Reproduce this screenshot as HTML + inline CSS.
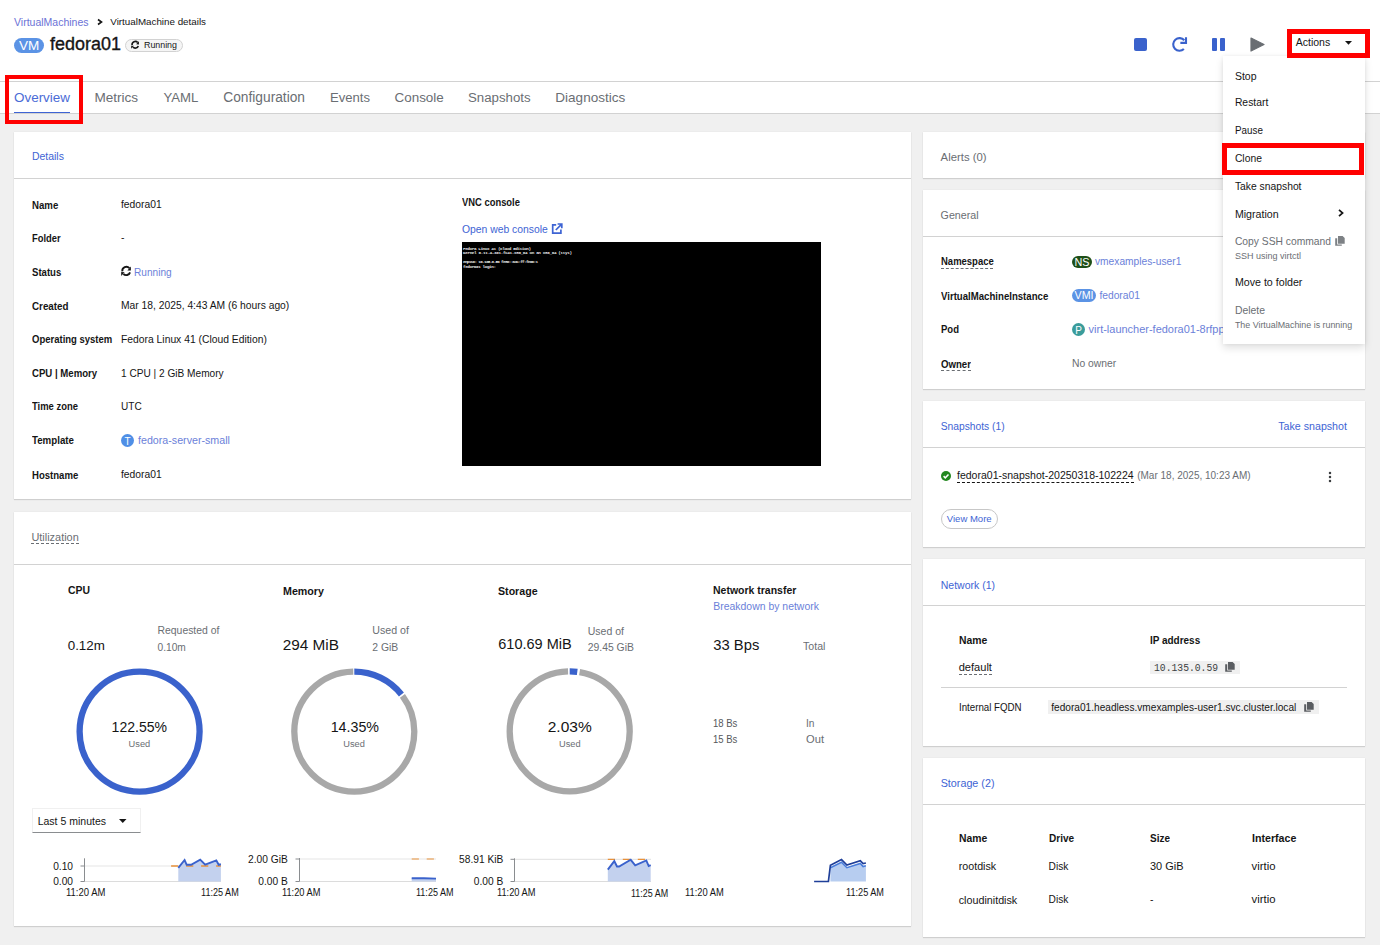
<!DOCTYPE html>
<html><head><meta charset="utf-8">
<style>
*{box-sizing:border-box;margin:0;padding:0}
html,body{width:1380px;height:945px;overflow:hidden;background:#f0f0f0;font-family:"Liberation Sans",sans-serif;color:#151515}
.a{position:absolute;white-space:nowrap}
svg{position:absolute;overflow:visible}
</style></head><body>
<div class="a" style="left:0px;top:0px;width:1380px;height:113px;background:#fff"></div>
<div class="a" style="left:0px;top:81px;width:1380px;height:1px;background:#d2d2d2"></div>
<div class="a" style="left:0px;top:113px;width:1380px;height:1px;background:#d2d2d2"></div>
<div class="a" style="left:14px;top:15.75px;font-size:10.51px;line-height:12.61px;font-weight:normal;color:#6b72d6;font-family:'Liberation Sans';">VirtualMachines</div>
<svg style="left:97px;top:19px;" width="6" height="6" viewBox="0 0 6 6"><path d="M1 0.5 L4.5 3 L1 5.5" fill="none" stroke="#151515" stroke-width="1.6"/></svg>
<div class="a" style="left:110.3px;top:15.82px;font-size:9.81px;line-height:11.77px;font-weight:normal;color:#151515;font-family:'Liberation Sans';">VirtualMachine details</div>
<div class="a" style="left:14px;top:38px;width:30px;height:15px;background:#5b93e5;border-radius:8px"></div>
<div class="a" style="left:18.8px;top:38.68px;font-size:12.59px;line-height:15.11px;font-weight:normal;color:#fff;font-family:'Liberation Sans';transform:scaleX(1.0753);transform-origin:0 0;">VM</div>
<div class="a" style="left:50px;top:33.88px;font-size:17.98px;line-height:21.58px;font-weight:normal;color:#151515;font-family:'Liberation Sans';-webkit-text-stroke:0.35px #151515;">fedora01</div>
<div class="a" style="left:125px;top:39px;width:58px;height:13px;background:#f5f5f5;border:1px solid #d2d2d2;border-radius:7px"></div>
<svg style="left:131px;top:40.3px;" width="12" height="12" viewBox="0 0 12 12"><g transform="scale(0.8)"><path d="M1.3 6.4 A4.1 4.1 0 0 1 8.4 3.2" fill="none" stroke="#151515" stroke-width="2"/><path d="M9.9 1.6 L9.9 5.6 L6.4 5.4 Z" fill="#151515"/><path d="M9.1 7.4 A4.1 4.1 0 0 1 2.4 9.0" fill="none" stroke="#151515" stroke-width="2"/><path d="M0.2 7.1 L0.2 10.9 L3.6 7.3 Z" fill="#151515"/></g></svg>
<div class="a" style="left:143.7px;top:39.18px;font-size:9.74px;line-height:11.69px;font-weight:normal;color:#151515;font-family:'Liberation Sans';transform:scaleX(0.9091);transform-origin:0 0;">Running</div>
<div class="a" style="left:1134px;top:38px;width:13px;height:13px;background:#3a62cc;border-radius:2px"></div>
<svg style="left:1168px;top:34px;" width="24" height="20" viewBox="0 0 24 20"><path d="M15.9 14.9 A6.3 6.3 0 1 1 16.3 6.3" fill="none" stroke="#3a62cc" stroke-width="2.1"/><path d="M18 4.2 V8.9 H13.4" fill="none" stroke="#3a62cc" stroke-width="2.1" stroke-linecap="square"/></svg>
<div class="a" style="left:1212px;top:38px;width:5px;height:13px;background:#3a62cc;border-radius:1px"></div>
<div class="a" style="left:1220px;top:38px;width:5px;height:13px;background:#3a62cc;border-radius:1px"></div>
<svg style="left:1250px;top:37px;" width="15" height="15" viewBox="0 0 15 15"><path d="M1 1 L14 7.5 L1 14 Z" fill="#6a6e73" stroke="#6a6e73" stroke-width="1.2" stroke-linejoin="round"/></svg>
<div class="a" style="left:1295.7px;top:36.14px;font-size:10.52px;line-height:12.62px;font-weight:normal;color:#151515;font-family:'Liberation Sans';">Actions</div>
<svg style="left:1344.5px;top:41px;" width="8" height="5" viewBox="0 0 8 5"><path d="M0 0 L7 0 L3.5 3.8 Z" fill="#151515"/></svg>
<div class="a" style="left:14px;top:90.08px;font-size:13.44px;line-height:16.13px;font-weight:normal;color:#4a6bd6;font-family:'Liberation Sans';">Overview</div>
<div class="a" style="left:14px;top:111.6px;width:56px;height:1.4px;background:#3e64d4"></div>
<div class="a" style="left:94.4px;top:89.94px;font-size:13.59px;line-height:16.31px;font-weight:normal;color:#6a6e73;font-family:'Liberation Sans';">Metrics</div>
<div class="a" style="left:163.5px;top:90.32px;font-size:13.18px;line-height:15.82px;font-weight:normal;color:#6a6e73;font-family:'Liberation Sans';">YAML</div>
<div class="a" style="left:223.3px;top:89.79px;font-size:13.74px;line-height:16.49px;font-weight:normal;color:#6a6e73;font-family:'Liberation Sans';">Configuration</div>
<div class="a" style="left:330px;top:90.42px;font-size:13.08px;line-height:15.7px;font-weight:normal;color:#6a6e73;font-family:'Liberation Sans';">Events</div>
<div class="a" style="left:394.5px;top:90.08px;font-size:13.44px;line-height:16.13px;font-weight:normal;color:#6a6e73;font-family:'Liberation Sans';">Console</div>
<div class="a" style="left:468px;top:90.26px;font-size:13.25px;line-height:15.9px;font-weight:normal;color:#6a6e73;font-family:'Liberation Sans';">Snapshots</div>
<div class="a" style="left:555.3px;top:89.98px;font-size:13.54px;line-height:16.25px;font-weight:normal;color:#6a6e73;font-family:'Liberation Sans';">Diagnostics</div>
<div class="a" style="left:4.6px;top:74.8px;width:78.6px;height:49.5px;border:4.7px solid #f00"></div>
<div class="a" style="left:14px;top:132px;width:897px;height:367px;background:#fff;box-shadow:0 1px 1px rgba(3,3,3,.12),0 0 1px rgba(3,3,3,.10)"></div>
<div class="a" style="left:31.9px;top:151.39px;font-size:10.47px;line-height:12.56px;font-weight:normal;color:#3e64d4;font-family:'Liberation Sans';">Details</div>
<div class="a" style="left:14px;top:178px;width:897px;height:1px;background:#d2d2d2"></div>
<div class="a" style="left:31.7px;top:198.85px;font-size:10.62px;line-height:12.74px;font-weight:bold;color:#151515;font-family:'Liberation Sans';transform:scaleX(0.9091);transform-origin:0 0;">Name</div>
<div class="a" style="left:31.7px;top:232.55px;font-size:10.3px;line-height:12.36px;font-weight:bold;color:#151515;font-family:'Liberation Sans';transform:scaleX(0.9091);transform-origin:0 0;">Folder</div>
<div class="a" style="left:31.7px;top:266.31px;font-size:10.55px;line-height:12.66px;font-weight:bold;color:#151515;font-family:'Liberation Sans';transform:scaleX(0.9091);transform-origin:0 0;">Status</div>
<div class="a" style="left:31.7px;top:299.67px;font-size:10.81px;line-height:12.97px;font-weight:bold;color:#151515;font-family:'Liberation Sans';transform:scaleX(0.9091);transform-origin:0 0;">Created</div>
<div class="a" style="left:31.7px;top:334.0px;font-size:10.46px;line-height:12.55px;font-weight:bold;color:#151515;font-family:'Liberation Sans';transform:scaleX(0.9091);transform-origin:0 0;">Operating system</div>
<div class="a" style="left:31.7px;top:367.28px;font-size:10.59px;line-height:12.71px;font-weight:bold;color:#151515;font-family:'Liberation Sans';transform:scaleX(0.9091);transform-origin:0 0;">CPU | Memory</div>
<div class="a" style="left:31.7px;top:400.76px;font-size:10.39px;line-height:12.47px;font-weight:bold;color:#151515;font-family:'Liberation Sans';transform:scaleX(0.9091);transform-origin:0 0;">Time zone</div>
<div class="a" style="left:31.7px;top:434.47px;font-size:10.7px;line-height:12.84px;font-weight:bold;color:#151515;font-family:'Liberation Sans';transform:scaleX(0.9091);transform-origin:0 0;">Template</div>
<div class="a" style="left:31.7px;top:468.93px;font-size:10.53px;line-height:12.64px;font-weight:bold;color:#151515;font-family:'Liberation Sans';transform:scaleX(0.9091);transform-origin:0 0;">Hostname</div>
<div class="a" style="left:121px;top:199.14px;font-size:10.31px;line-height:12.37px;font-weight:normal;color:#151515;font-family:'Liberation Sans';">fedora01</div>
<div class="a" style="left:121px;top:232.46px;font-size:10.4px;line-height:12.48px;font-weight:normal;color:#151515;font-family:'Liberation Sans';">-</div>
<svg style="left:121px;top:265px;" width="12" height="12" viewBox="0 0 12 12"><path d="M1.3 6.4 A4.1 4.1 0 0 1 8.4 3.2" fill="none" stroke="#151515" stroke-width="1.9"/><path d="M9.9 1.6 L9.9 5.6 L6.4 5.4 Z" fill="#151515"/><path d="M9.1 7.4 A4.1 4.1 0 0 1 2.4 9.0" fill="none" stroke="#151515" stroke-width="1.9"/><path d="M0.2 7.1 L0.2 10.9 L3.6 7.3 Z" fill="#151515"/></svg>
<div class="a" style="left:134.1px;top:266.75px;font-size:10.09px;line-height:12.11px;font-weight:normal;color:#6b7fd9;font-family:'Liberation Sans';">Running</div>
<div class="a" style="left:121px;top:300.14px;font-size:10.31px;line-height:12.37px;font-weight:normal;color:#151515;font-family:'Liberation Sans';">Mar 18, 2025, 4:43 AM (6 hours ago)</div>
<div class="a" style="left:121px;top:334.11px;font-size:10.34px;line-height:12.41px;font-weight:normal;color:#151515;font-family:'Liberation Sans';">Fedora Linux 41 (Cloud Edition)</div>
<div class="a" style="left:121px;top:367.72px;font-size:10.12px;line-height:12.14px;font-weight:normal;color:#151515;font-family:'Liberation Sans';">1 CPU | 2 GiB Memory</div>
<div class="a" style="left:121px;top:401.07px;font-size:10.07px;line-height:12.08px;font-weight:normal;color:#151515;font-family:'Liberation Sans';">UTC</div>
<div class="a" style="left:121px;top:434px;width:13px;height:13px;background:#4f8fe6;border-radius:50%"></div>
<div class="a" style="left:124.6px;top:435.74px;font-size:10px;line-height:12.0px;font-weight:normal;color:#fff;font-family:'Liberation Sans';">T</div>
<div class="a" style="left:138px;top:434.49px;font-size:10.68px;line-height:12.82px;font-weight:normal;color:#6b7fd9;font-family:'Liberation Sans';">fedora-server-small</div>
<div class="a" style="left:121px;top:469.14px;font-size:10.31px;line-height:12.37px;font-weight:normal;color:#151515;font-family:'Liberation Sans';">fedora01</div>
<div class="a" style="left:462px;top:197.11px;font-size:10.34px;line-height:12.41px;font-weight:bold;color:#151515;font-family:'Liberation Sans';transform:scaleX(0.9091);transform-origin:0 0;">VNC console</div>
<div class="a" style="left:462px;top:223.7px;font-size:10.36px;line-height:12.43px;font-weight:normal;color:#3e64d4;font-family:'Liberation Sans';">Open web console</div>
<svg style="left:551px;top:223px;" width="12" height="12" viewBox="0 0 12 12"><path d="M5.2 1.8 H1.7 V10.1 H9.9 V6.6" fill="none" stroke="#3e64d4" stroke-width="1.7"/><path d="M4.8 7 L10.2 1.6 M6.6 1 H10.8 V5.2" fill="none" stroke="#3e64d4" stroke-width="1.7"/></svg>
<div class="a" style="left:462px;top:242px;width:359px;height:224px;background:#000"></div>
<svg class="a" style="left:462px;top:244px" width="200" height="30"><g fill="#e8e8e8" font-family="Liberation Mono" font-size="4.3" font-weight="bold"><text x="1" y="5.5" textLength="68">Fedora Linux 41 (Cloud Edition)</text><text x="1" y="10" textLength="109">Kernel 6.11.4-301.fc41.x86_64 on an x86_64 (tty1)</text><text x="1" y="19" textLength="75">enp1s0: 10.135.0.59 fe80::a3c:ff:fe00:1</text><text x="1" y="23.5" textLength="33">fedora01 login:</text></g></svg>
<div class="a" style="left:14px;top:512px;width:897px;height:414px;background:#fff;box-shadow:0 1px 1px rgba(3,3,3,.12),0 0 1px rgba(3,3,3,.10)"></div>
<div class="a" style="left:31.4px;top:531.25px;font-size:10.93px;line-height:13.12px;font-weight:normal;color:#6a6e73;font-family:'Liberation Sans';">Utilization</div>
<div class="a" style="left:31.4px;top:543px;width:47.4px;height:1px;border-top:1px dashed #6a6e73"></div>
<div class="a" style="left:14px;top:564px;width:897px;height:1px;background:#d2d2d2"></div>
<div class="a" style="left:67.7px;top:584.05px;font-size:11.46px;line-height:13.75px;font-weight:bold;color:#151515;font-family:'Liberation Sans';transform:scaleX(0.9091);transform-origin:0 0;">CPU</div>
<div class="a" style="left:67.7px;top:637.53px;font-size:13.38px;line-height:16.06px;font-weight:normal;color:#151515;font-family:'Liberation Sans';">0.12m</div>
<div class="a" style="left:157.5px;top:624.64px;font-size:10.42px;line-height:12.5px;font-weight:normal;color:#6a6e73;font-family:'Liberation Sans';">Requested of</div>
<div class="a" style="left:157.5px;top:641.75px;font-size:10.2px;line-height:12.24px;font-weight:normal;color:#6a6e73;font-family:'Liberation Sans';">0.10m</div>
<svg style="left:0px;top:0px;" width="1380" height="945" viewBox="0 0 1380 945"><circle cx="139.6" cy="731.6" r="60.0" fill="none" stroke="#3a62cc" stroke-width="6.3"/></svg>
<div class="a" style="left:111.6px;top:719.29px;font-size:14.06px;line-height:16.87px;font-weight:normal;color:#151515;font-family:'Liberation Sans';">122.55%</div>
<div class="a" style="left:128.6px;top:739.24px;font-size:9.25px;line-height:11.1px;font-weight:normal;color:#6a6e73;font-family:'Liberation Sans';">Used</div>
<div class="a" style="left:283px;top:583.77px;font-size:11.76px;line-height:14.11px;font-weight:bold;color:#151515;font-family:'Liberation Sans';transform:scaleX(0.9091);transform-origin:0 0;">Memory</div>
<div class="a" style="left:282.7px;top:635.67px;font-size:15.35px;line-height:18.42px;font-weight:normal;color:#151515;font-family:'Liberation Sans';">294 MiB</div>
<div class="a" style="left:372.3px;top:624.42px;font-size:10.65px;line-height:12.78px;font-weight:normal;color:#6a6e73;font-family:'Liberation Sans';">Used of</div>
<div class="a" style="left:372.3px;top:641.56px;font-size:10.4px;line-height:12.48px;font-weight:normal;color:#6a6e73;font-family:'Liberation Sans';">2 GiB</div>
<svg style="left:0px;top:0px;" width="1380" height="945" viewBox="0 0 1380 945"><circle cx="354.3" cy="731.6" r="60.0" fill="none" stroke="#a8a8a8" stroke-width="6.3" stroke-dasharray="319.5418607721298 57.449257658645344" stroke-dashoffset="-55.77374157673079" transform="rotate(-90 354.3 731.6)"/><circle cx="354.3" cy="731.6" r="60.0" fill="none" stroke="#3a62cc" stroke-width="6.3" stroke-dasharray="54.09822549481623 376.99111843077515" transform="rotate(-90 354.3 731.6)"/></svg>
<div class="a" style="left:330.7px;top:719.12px;font-size:14.24px;line-height:17.09px;font-weight:normal;color:#151515;font-family:'Liberation Sans';">14.35%</div>
<div class="a" style="left:343.3px;top:739.24px;font-size:9.25px;line-height:11.1px;font-weight:normal;color:#6a6e73;font-family:'Liberation Sans';">Used</div>
<div class="a" style="left:497.7px;top:583.83px;font-size:11.7px;line-height:14.04px;font-weight:bold;color:#151515;font-family:'Liberation Sans';transform:scaleX(0.9091);transform-origin:0 0;">Storage</div>
<div class="a" style="left:498.3px;top:636.47px;font-size:14.51px;line-height:17.41px;font-weight:normal;color:#151515;font-family:'Liberation Sans';">610.69 MiB</div>
<div class="a" style="left:587.7px;top:624.53px;font-size:10.53px;line-height:12.64px;font-weight:normal;color:#6a6e73;font-family:'Liberation Sans';">Used of</div>
<div class="a" style="left:587.7px;top:641.55px;font-size:10.41px;line-height:12.49px;font-weight:normal;color:#6a6e73;font-family:'Liberation Sans';">29.45 GiB</div>
<svg style="left:0px;top:0px;" width="1380" height="945" viewBox="0 0 1380 945"><circle cx="569.7" cy="731.4" r="60.0" fill="none" stroke="#a8a8a8" stroke-width="6.3" stroke-dasharray="364.73052950136537 12.260588929409764" stroke-dashoffset="-9.95675431677725" transform="rotate(-90 569.7 731.4)"/><circle cx="569.7" cy="731.4" r="60.0" fill="none" stroke="#3a62cc" stroke-width="6.3" stroke-dasharray="7.652919704144734 376.99111843077515" transform="rotate(-90 569.7 731.4)"/></svg>
<div class="a" style="left:547.7px;top:717.91px;font-size:15.52px;line-height:18.62px;font-weight:normal;color:#151515;font-family:'Liberation Sans';">2.03%</div>
<div class="a" style="left:559px;top:739.24px;font-size:9.25px;line-height:11.1px;font-weight:normal;color:#6a6e73;font-family:'Liberation Sans';">Used</div>
<div class="a" style="left:713.3px;top:583.98px;font-size:11.54px;line-height:13.85px;font-weight:bold;color:#151515;font-family:'Liberation Sans';transform:scaleX(0.9091);transform-origin:0 0;">Network transfer</div>
<div class="a" style="left:713.3px;top:600.71px;font-size:10.45px;line-height:12.54px;font-weight:normal;color:#6b7fd9;font-family:'Liberation Sans';">Breakdown by network</div>
<div class="a" style="left:713.3px;top:637.11px;font-size:14.78px;line-height:17.74px;font-weight:normal;color:#151515;font-family:'Liberation Sans';">33 Bps</div>
<div class="a" style="left:803.3px;top:640.06px;font-size:11.13px;line-height:13.36px;font-weight:normal;color:#6a6e73;font-family:'Liberation Sans';transform:scaleX(0.9524);transform-origin:0 0;">Total</div>
<div class="a" style="left:713.3px;top:717.06px;font-size:11.45px;line-height:13.74px;font-weight:normal;color:#55585c;font-family:'Liberation Sans';transform:scaleX(0.8333);transform-origin:0 0;">18 Bs</div>
<div class="a" style="left:713.3px;top:733.06px;font-size:11.45px;line-height:13.74px;font-weight:normal;color:#55585c;font-family:'Liberation Sans';transform:scaleX(0.8333);transform-origin:0 0;">15 Bs</div>
<div class="a" style="left:806px;top:718.25px;font-size:10.2px;line-height:12.24px;font-weight:normal;color:#6a6e73;font-family:'Liberation Sans';">In</div>
<div class="a" style="left:806px;top:734.18px;font-size:10.27px;line-height:12.32px;font-weight:normal;color:#6a6e73;font-family:'Liberation Sans';transform:scaleX(1.087);transform-origin:0 0;">Out</div>
<div class="a" style="left:32px;top:808px;width:109px;height:25px;border:1px solid #f0f0f0;border-bottom:1px solid #8a8d90;background:#fff"></div>
<div class="a" style="left:37.7px;top:814.66px;font-size:10.5px;line-height:12.6px;font-weight:normal;color:#151515;font-family:'Liberation Sans';">Last 5 minutes</div>
<svg style="left:119px;top:819px;" width="8" height="5" viewBox="0 0 8 5"><path d="M0 0 L7.5 0 L3.75 4 Z" fill="#151515"/></svg>
<svg style="left:0px;top:0px;" width="1380" height="945" viewBox="0 0 1380 945"><line x1="84.5" y1="866" x2="220.9" y2="866" stroke="#e6e6e6" stroke-width="1.2"/><line x1="84.5" y1="881.5" x2="220.9" y2="881.5" stroke="#dcdcdc" stroke-width="1.2"/><line x1="84.5" y1="858.3" x2="84.5" y2="881.5" stroke="#8a8d90" stroke-width="1"/><line x1="80.5" y1="866" x2="84.5" y2="866" stroke="#8a8d90" stroke-width="1"/><line x1="80.5" y1="881.5" x2="84.5" y2="881.5" stroke="#8a8d90" stroke-width="1"/><polygon points="178.3,881.5 178.3,867.8 184.6,860 186.7,864.8 191.1,864.8 200.2,859.6 205.2,864.6 216.3,860.4 218.7,864.8 220.9,864.3 220.9,881.5" fill="#c3d1ee"/><line x1="171.1" y1="866" x2="220.9" y2="866" stroke="#e8913a" stroke-width="1.6" stroke-dasharray="7.2 7.8"/><polyline points="178.3,867.8 184.6,860 186.7,864.8 191.1,864.8 200.2,859.6 205.2,864.6 216.3,860.4 218.7,864.8 220.9,864.3" fill="none" stroke="#3a62cc" stroke-width="1.9" stroke-linejoin="miter"/></svg>
<div class="a" style="left:53.15px;top:861.15px;font-size:10.2px;line-height:12.24px;font-weight:normal;color:#151515;font-family:'Liberation Sans';">0.10</div>
<div class="a" style="left:53.15px;top:876.15px;font-size:10.2px;line-height:12.24px;font-weight:normal;color:#151515;font-family:'Liberation Sans';">0.00</div>
<div class="a" style="left:66px;top:885.88px;font-size:11.22px;line-height:13.46px;font-weight:normal;color:#151515;font-family:'Liberation Sans';transform:scaleX(0.8475);transform-origin:0 0;">11:20 AM</div>
<div class="a" style="left:201px;top:886.33px;font-size:10.74px;line-height:12.89px;font-weight:normal;color:#151515;font-family:'Liberation Sans';transform:scaleX(0.8475);transform-origin:0 0;">11:25 AM</div>
<svg style="left:0px;top:0px;" width="1380" height="945" viewBox="0 0 1380 945"><line x1="299.5" y1="859" x2="436" y2="859" stroke="#e6e6e6" stroke-width="1.2"/><line x1="299.5" y1="881.5" x2="436" y2="881.5" stroke="#dcdcdc" stroke-width="1.2"/><line x1="299.5" y1="858" x2="299.5" y2="881.5" stroke="#8a8d90" stroke-width="1"/><line x1="295.5" y1="859" x2="299.5" y2="859" stroke="#8a8d90" stroke-width="1"/><line x1="295.5" y1="881.5" x2="299.5" y2="881.5" stroke="#8a8d90" stroke-width="1"/><polygon points="411.7,881.5 411.7,878.2 424,878.3 436,878.6 436,881.5" fill="#c3d1ee"/><line x1="411.7" y1="859" x2="436" y2="859" stroke="#e8913a" stroke-width="1.2" stroke-dasharray="7.2 7.8"/><polyline points="411.7,878.2 424,878.3 436,878.6" fill="none" stroke="#3a62cc" stroke-width="1.9" stroke-linejoin="miter"/></svg>
<div class="a" style="left:248.11px;top:854.05px;font-size:10.2px;line-height:12.24px;font-weight:normal;color:#151515;font-family:'Liberation Sans';">2.00 GiB</div>
<div class="a" style="left:258.31px;top:876.25px;font-size:10.2px;line-height:12.24px;font-weight:normal;color:#151515;font-family:'Liberation Sans';">0.00 B</div>
<div class="a" style="left:281.7px;top:886.14px;font-size:10.94px;line-height:13.13px;font-weight:normal;color:#151515;font-family:'Liberation Sans';transform:scaleX(0.8475);transform-origin:0 0;">11:20 AM</div>
<div class="a" style="left:416px;top:886.41px;font-size:10.66px;line-height:12.79px;font-weight:normal;color:#151515;font-family:'Liberation Sans';transform:scaleX(0.8475);transform-origin:0 0;">11:25 AM</div>
<svg style="left:0px;top:0px;" width="1380" height="945" viewBox="0 0 1380 945"><line x1="514.5" y1="859.3" x2="651" y2="859.3" stroke="#e6e6e6" stroke-width="1.2"/><line x1="514.5" y1="881.5" x2="651" y2="881.5" stroke="#dcdcdc" stroke-width="1.2"/><line x1="514.5" y1="858.3" x2="514.5" y2="881.5" stroke="#8a8d90" stroke-width="1"/><line x1="510.5" y1="859.3" x2="514.5" y2="859.3" stroke="#8a8d90" stroke-width="1"/><line x1="510.5" y1="881.5" x2="514.5" y2="881.5" stroke="#8a8d90" stroke-width="1"/><polygon points="607.8,881.5 607.8,869.6 614.3,861.1 617,866.5 619.1,866.5 630.7,859.8 635.2,865.4 646.3,860.4 648.7,866.1 650.7,865.2 650.7,881.5" fill="#c3d1ee"/><line x1="607.8" y1="859.3" x2="651" y2="859.3" stroke="#e8913a" stroke-width="1.2" stroke-dasharray="7.2 7.8"/><polyline points="607.8,869.6 614.3,861.1 617,866.5 619.1,866.5 630.7,859.8 635.2,865.4 646.3,860.4 648.7,866.1 650.7,865.2" fill="none" stroke="#3a62cc" stroke-width="1.9" stroke-linejoin="miter"/></svg>
<div class="a" style="left:459.07px;top:853.95px;font-size:10.2px;line-height:12.24px;font-weight:normal;color:#151515;font-family:'Liberation Sans';">58.91 KiB</div>
<div class="a" style="left:473.81px;top:876.45px;font-size:10.2px;line-height:12.24px;font-weight:normal;color:#151515;font-family:'Liberation Sans';">0.00 B</div>
<div class="a" style="left:496.7px;top:886.24px;font-size:10.94px;line-height:13.13px;font-weight:normal;color:#151515;font-family:'Liberation Sans';transform:scaleX(0.8475);transform-origin:0 0;">11:20 AM</div>
<div class="a" style="left:631.3px;top:886.61px;font-size:10.55px;line-height:12.66px;font-weight:normal;color:#151515;font-family:'Liberation Sans';transform:scaleX(0.8475);transform-origin:0 0;">11:25 AM</div>
<svg style="left:0px;top:0px;" width="1380" height="945" viewBox="0 0 1380 945"><polygon points="830.4,881.5 830.4,867.8 841.5,862.3 846.9,867.7 860.3,863.5 863.1,866.5 865.9,865.7 865.9,881.5" fill="#b7cdf0"/><polyline points="830.4,867.8 841.5,862.3 846.9,867.7 860.3,863.5 863.1,866.5 865.9,865.7" fill="none" stroke="#4a7ddb" stroke-width="1.6"/><polyline points="814.1,881.5 828.4,881.5 830.4,865.2 841.5,859.6 846.9,865 860.3,860.7 863.1,863.5 865.9,863" fill="none" stroke="#1f3f99" stroke-width="1.7"/></svg>
<div class="a" style="left:685.2px;top:886.16px;font-size:11.03px;line-height:13.24px;font-weight:normal;color:#151515;font-family:'Liberation Sans';transform:scaleX(0.8475);transform-origin:0 0;">11:20 AM</div>
<div class="a" style="left:846px;top:886.38px;font-size:10.8px;line-height:12.96px;font-weight:normal;color:#151515;font-family:'Liberation Sans';transform:scaleX(0.8475);transform-origin:0 0;">11:25 AM</div>
<div class="a" style="left:923px;top:132px;width:442px;height:46px;background:#fff;box-shadow:0 1px 1px rgba(3,3,3,.12),0 0 1px rgba(3,3,3,.10)"></div>
<div class="a" style="left:940.6px;top:150.77px;font-size:11.34px;line-height:13.61px;font-weight:normal;color:#6a6e73;font-family:'Liberation Sans';">Alerts (0)</div>
<div class="a" style="left:923px;top:190px;width:442px;height:199px;background:#fff;box-shadow:0 1px 1px rgba(3,3,3,.12),0 0 1px rgba(3,3,3,.10)"></div>
<div class="a" style="left:940.6px;top:209.49px;font-size:10.68px;line-height:12.82px;font-weight:normal;color:#6a6e73;font-family:'Liberation Sans';">General</div>
<div class="a" style="left:923px;top:236px;width:442px;height:1px;background:#d2d2d2"></div>
<div class="a" style="left:940.6px;top:255.71px;font-size:10.45px;line-height:12.54px;font-weight:bold;color:#151515;font-family:'Liberation Sans';transform:scaleX(0.9091);transform-origin:0 0;">Namespace</div>
<div class="a" style="left:940.6px;top:268px;width:52.8px;height:1px;border-top:1px dashed #6a6e73"></div>
<div class="a" style="left:940.6px;top:289.58px;font-size:10.59px;line-height:12.71px;font-weight:bold;color:#151515;font-family:'Liberation Sans';transform:scaleX(0.9091);transform-origin:0 0;">VirtualMachineInstance</div>
<div class="a" style="left:940.6px;top:323.58px;font-size:10.48px;line-height:12.58px;font-weight:bold;color:#151515;font-family:'Liberation Sans';transform:scaleX(0.9091);transform-origin:0 0;">Pod</div>
<div class="a" style="left:940.6px;top:357.57px;font-size:10.6px;line-height:12.72px;font-weight:bold;color:#151515;font-family:'Liberation Sans';transform:scaleX(0.9091);transform-origin:0 0;">Owner</div>
<div class="a" style="left:940.6px;top:370px;width:30.0px;height:1px;border-top:1px dashed #6a6e73"></div>
<div class="a" style="left:1072px;top:255.7px;width:20px;height:12.3px;background:#1e4f18;border-radius:7px"></div>
<div class="a" style="left:1074.5px;top:255.98px;font-size:10.8px;line-height:12.96px;font-weight:normal;color:#fff;font-family:'Liberation Sans';">NS</div>
<div class="a" style="left:1095px;top:255.92px;font-size:10.23px;line-height:12.28px;font-weight:normal;color:#6b7fd9;font-family:'Liberation Sans';">vmexamples-user1</div>
<div class="a" style="left:1072px;top:289px;width:24px;height:13px;background:#5b93e5;border-radius:7px"></div>
<div class="a" style="left:1074.5px;top:289.48px;font-size:10.69px;line-height:12.83px;font-weight:normal;color:#fff;font-family:'Liberation Sans';">VMI</div>
<div class="a" style="left:1099.4px;top:289.87px;font-size:10.28px;line-height:12.34px;font-weight:normal;color:#6b7fd9;font-family:'Liberation Sans';">fedora01</div>
<div class="a" style="left:1072px;top:323px;width:13px;height:13px;background:#3a9c9b;border-radius:50%"></div>
<div class="a" style="left:1075.3px;top:324.54px;font-size:10px;line-height:12.0px;font-weight:normal;color:#fff;font-family:'Liberation Sans';">P</div>
<div class="a" style="left:1088.6px;top:323.12px;font-size:10.97px;line-height:13.16px;font-weight:normal;color:#6b7fd9;font-family:'Liberation Sans';">virt-launcher-fedora01-8rfpp</div>
<div class="a" style="left:1072px;top:357.8px;font-size:10.35px;line-height:12.42px;font-weight:normal;color:#6a6e73;font-family:'Liberation Sans';">No owner</div>
<div class="a" style="left:923px;top:401px;width:442px;height:146px;background:#fff;box-shadow:0 1px 1px rgba(3,3,3,.12),0 0 1px rgba(3,3,3,.10)"></div>
<div class="a" style="left:940.7px;top:420.67px;font-size:10.28px;line-height:12.34px;font-weight:normal;color:#3e64d4;font-family:'Liberation Sans';">Snapshots (1)</div>
<div class="a" style="left:1278.3px;top:420.32px;font-size:10.65px;line-height:12.78px;font-weight:normal;color:#3e64d4;font-family:'Liberation Sans';">Take snapshot</div>
<div class="a" style="left:923px;top:447px;width:442px;height:1px;background:#d2d2d2"></div>
<svg style="left:941px;top:470.8px;" width="10" height="10" viewBox="0 0 10 10"><circle cx="5" cy="5" r="5" fill="#23881f"/><path d="M2.6 5.1 L4.3 6.8 L7.5 3.4" fill="none" stroke="#fff" stroke-width="1.5"/></svg>
<div class="a" style="left:957px;top:469.13px;font-size:10.53px;line-height:12.64px;font-weight:normal;color:#151515;font-family:'Liberation Sans';">fedora01-snapshot-20250318-102224</div>
<div class="a" style="left:957px;top:481.5px;width:177px;height:1.0px;border-top:1px dashed #151515"></div>
<div class="a" style="left:1137.2px;top:469.74px;font-size:10.0px;line-height:12.0px;font-weight:normal;color:#6a6e73;font-family:'Liberation Sans';">(Mar 18, 2025, 10:23 AM)</div>
<svg style="left:1328px;top:471px;" width="4" height="12" viewBox="0 0 4 12"><circle cx="2" cy="2" r="1.25" fill="#3c3f42"/><circle cx="2" cy="6" r="1.25" fill="#3c3f42"/><circle cx="2" cy="10" r="1.25" fill="#3c3f42"/></svg>
<div class="a" style="left:941.3px;top:509.2px;width:56.7px;height:19.4px;border:1px solid #c7c7c7;border-radius:10px"></div>
<div class="a" style="left:946.8px;top:512.97px;font-size:9.54px;line-height:11.45px;font-weight:normal;color:#3e64d4;font-family:'Liberation Sans';">View More</div>
<div class="a" style="left:923px;top:559px;width:442px;height:187px;background:#fff;box-shadow:0 1px 1px rgba(3,3,3,.12),0 0 1px rgba(3,3,3,.10)"></div>
<div class="a" style="left:940.7px;top:578.53px;font-size:10.53px;line-height:12.64px;font-weight:normal;color:#3e64d4;font-family:'Liberation Sans';">Network (1)</div>
<div class="a" style="left:923px;top:605px;width:442px;height:1px;background:#d2d2d2"></div>
<div class="a" style="left:958.7px;top:633.88px;font-size:11.43px;line-height:13.72px;font-weight:bold;color:#151515;font-family:'Liberation Sans';transform:scaleX(0.9091);transform-origin:0 0;">Name</div>
<div class="a" style="left:1150.1px;top:634.33px;font-size:10.96px;line-height:13.15px;font-weight:bold;color:#151515;font-family:'Liberation Sans';transform:scaleX(0.9091);transform-origin:0 0;">IP address</div>
<div class="a" style="left:958.7px;top:660.8px;font-size:11.09px;line-height:13.31px;font-weight:normal;color:#151515;font-family:'Liberation Sans';">default</div>
<div class="a" style="left:958.7px;top:673.5px;width:33.3px;height:1.0px;border-top:1px dashed #6a6e73"></div>
<div class="a" style="left:1150px;top:660.5px;width:90px;height:13.5px;background:#f0f0f0"></div>
<div class="a" style="left:1153.5px;top:662.17px;font-size:10.88px;line-height:13.06px;font-weight:normal;color:#3c3f42;font-family:'Liberation Mono';transform:scaleX(0.8929);transform-origin:0 0;">10.135.0.59</div>
<svg style="left:1224.7px;top:662px;" width="10" height="10" viewBox="0 0 10 10"><path d="M3 0 H7.6 L9.7 2.1 V7.7 H3 Z" fill="#5a5d61"/><path d="M0.2 2.2 H2.2 V8.4 H6.8 V9.8 H0.2 Z" fill="#5a5d61"/></svg>
<div class="a" style="left:941.3px;top:687px;width:405.7px;height:1px;background:#d2d2d2"></div>
<div class="a" style="left:958.7px;top:701.37px;font-size:10.7px;line-height:12.84px;font-weight:normal;color:#151515;font-family:'Liberation Sans';transform:scaleX(0.9091);transform-origin:0 0;">Internal FQDN</div>
<div class="a" style="left:1048px;top:700.3px;width:271px;height:13.7px;background:#f0f0f0"></div>
<div class="a" style="left:1051.3px;top:701.92px;font-size:10.12px;line-height:12.14px;font-weight:normal;color:#151515;font-family:'Liberation Sans';">fedora01.headless.vmexamples-user1.svc.cluster.local</div>
<svg style="left:1303.5px;top:702px;" width="10" height="10" viewBox="0 0 10 10"><path d="M3 0 H7.6 L9.7 2.1 V7.7 H3 Z" fill="#5a5d61"/><path d="M0.2 2.2 H2.2 V8.4 H6.8 V9.8 H0.2 Z" fill="#5a5d61"/></svg>
<div class="a" style="left:923px;top:758px;width:442px;height:179px;background:#fff;box-shadow:0 1px 1px rgba(3,3,3,.12),0 0 1px rgba(3,3,3,.10)"></div>
<div class="a" style="left:940.7px;top:777.23px;font-size:10.75px;line-height:12.9px;font-weight:normal;color:#3e64d4;font-family:'Liberation Sans';">Storage (2)</div>
<div class="a" style="left:923px;top:804px;width:442px;height:1px;background:#d2d2d2"></div>
<div class="a" style="left:958.7px;top:831.78px;font-size:11.43px;line-height:13.72px;font-weight:bold;color:#151515;font-family:'Liberation Sans';transform:scaleX(0.9091);transform-origin:0 0;">Name</div>
<div class="a" style="left:1048.6px;top:832.11px;font-size:11.08px;line-height:13.3px;font-weight:bold;color:#151515;font-family:'Liberation Sans';transform:scaleX(0.9091);transform-origin:0 0;">Drive</div>
<div class="a" style="left:1150px;top:832.2px;font-size:10.99px;line-height:13.19px;font-weight:bold;color:#151515;font-family:'Liberation Sans';transform:scaleX(0.9091);transform-origin:0 0;">Size</div>
<div class="a" style="left:1251.6px;top:831.13px;font-size:11.69px;line-height:14.03px;font-weight:bold;color:#151515;font-family:'Liberation Sans';transform:scaleX(0.9091);transform-origin:0 0;">Interface</div>
<div class="a" style="left:958.7px;top:860.36px;font-size:10.71px;line-height:12.85px;font-weight:normal;color:#151515;font-family:'Liberation Sans';">rootdisk</div>
<div class="a" style="left:1048.6px;top:860.86px;font-size:10.18px;line-height:12.22px;font-weight:normal;color:#151515;font-family:'Liberation Sans';">Disk</div>
<div class="a" style="left:1150px;top:860.13px;font-size:10.96px;line-height:13.15px;font-weight:normal;color:#151515;font-family:'Liberation Sans';">30 GiB</div>
<div class="a" style="left:1251.6px;top:859.79px;font-size:11.32px;line-height:13.58px;font-weight:normal;color:#151515;font-family:'Liberation Sans';">virtio</div>
<div class="a" style="left:958.7px;top:893.62px;font-size:10.76px;line-height:12.91px;font-weight:normal;color:#151515;font-family:'Liberation Sans';">cloudinitdisk</div>
<div class="a" style="left:1048.6px;top:894.16px;font-size:10.18px;line-height:12.22px;font-weight:normal;color:#151515;font-family:'Liberation Sans';">Disk</div>
<div class="a" style="left:1150px;top:893.96px;font-size:10.4px;line-height:12.48px;font-weight:normal;color:#151515;font-family:'Liberation Sans';">-</div>
<div class="a" style="left:1251.6px;top:893.09px;font-size:11.32px;line-height:13.58px;font-weight:normal;color:#151515;font-family:'Liberation Sans';">virtio</div>
<div class="a" style="left:1223px;top:56px;width:142px;height:288px;background:#fff;box-shadow:0 4px 8px rgba(3,3,3,.12),0 0 4px rgba(3,3,3,.06)"></div>
<div class="a" style="left:1234.9px;top:69.86px;font-size:10.5px;line-height:12.6px;font-weight:normal;color:#151515;font-family:'Liberation Sans';">Stop</div>
<div class="a" style="left:1234.9px;top:97.0px;font-size:10.36px;line-height:12.43px;font-weight:normal;color:#151515;font-family:'Liberation Sans';">Restart</div>
<div class="a" style="left:1234.9px;top:124.46px;font-size:10.82px;line-height:12.98px;font-weight:normal;color:#151515;font-family:'Liberation Sans';transform:scaleX(0.9091);transform-origin:0 0;">Pause</div>
<div class="a" style="left:1234.9px;top:152.92px;font-size:10.33px;line-height:12.4px;font-weight:normal;color:#151515;font-family:'Liberation Sans';">Clone</div>
<div class="a" style="left:1234.9px;top:180.81px;font-size:10.34px;line-height:12.41px;font-weight:normal;color:#151515;font-family:'Liberation Sans';">Take snapshot</div>
<div class="a" style="left:1234.9px;top:207.82px;font-size:10.65px;line-height:12.78px;font-weight:normal;color:#151515;font-family:'Liberation Sans';">Migration</div>
<div class="a" style="left:1234.9px;top:236.05px;font-size:10.3px;line-height:12.36px;font-weight:normal;color:#6a6e73;font-family:'Liberation Sans';">Copy SSH command</div>
<div class="a" style="left:1234.9px;top:276.4px;font-size:10.67px;line-height:12.8px;font-weight:normal;color:#151515;font-family:'Liberation Sans';">Move to folder</div>
<div class="a" style="left:1234.9px;top:304.85px;font-size:10.41px;line-height:12.49px;font-weight:normal;color:#6a6e73;font-family:'Liberation Sans';">Delete</div>
<div class="a" style="left:1234.9px;top:250.67px;font-size:9.01px;line-height:10.81px;font-weight:normal;color:#6a6e73;font-family:'Liberation Sans';">SSH using virtctl</div>
<div class="a" style="left:1234.9px;top:319.98px;font-size:8.89px;line-height:10.67px;font-weight:normal;color:#6a6e73;font-family:'Liberation Sans';">The VirtualMachine is running</div>
<svg style="left:1338px;top:209px;" width="6" height="8" viewBox="0 0 6 8"><path d="M1 0.8 L4.6 4 L1 7.2" fill="none" stroke="#151515" stroke-width="1.7"/></svg>
<svg style="left:1335px;top:236px;" width="9" height="9" viewBox="0 0 9 9"><path d="M3 0 H7.6 L9.7 2.1 V7.7 H3 Z" fill="#7d8185"/><path d="M0.2 2.2 H2.2 V8.4 H6.8 V9.8 H0.2 Z" fill="#7d8185"/></svg>
<div class="a" style="left:1221.6px;top:142.6px;width:142.4px;height:32.4px;border:5px solid #f00"></div>
<div class="a" style="left:1287px;top:29px;width:83px;height:29px;border:5px solid #f00"></div>
</body></html>
